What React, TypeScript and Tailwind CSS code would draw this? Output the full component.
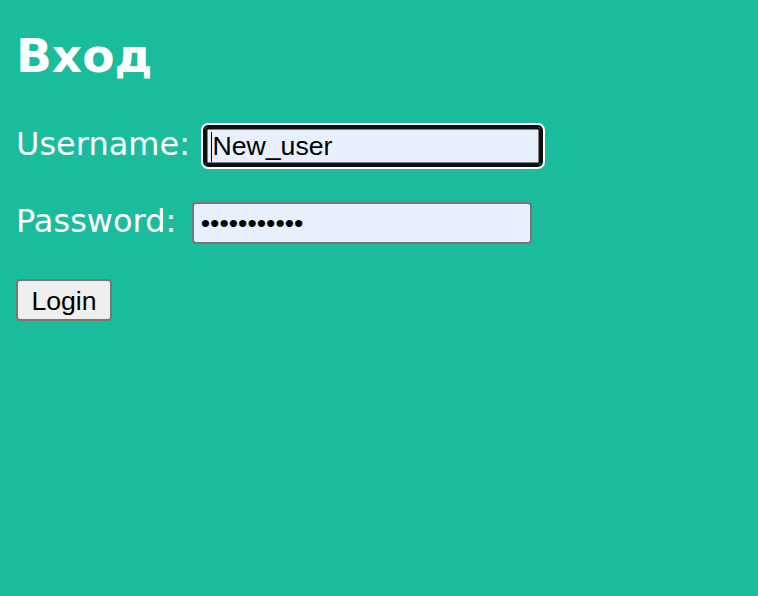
import React from "react";

const App: React.FC = () => {
  return (
    <div
      className="min-h-screen w-full bg-[#1abc9c] px-4 pt-[28px]"
      style={{ fontFamily: '"DejaVu Sans", Verdana, sans-serif' }}
    >
      <h1 className="mb-[42px] text-[47px] leading-[55px] font-bold text-white">Вход</h1>

      <form className="flex flex-col gap-[35px]" onSubmit={(e) => e.preventDefault()}>
        <div className="flex items-baseline gap-[13.5px]">
          <label htmlFor="username" className="text-[32px] leading-none text-white">
            Username:
          </label>
          <div className="relative">
            <input
              id="username"
              name="username"
              type="text"
              defaultValue="New_user"
              className="h-[42px] w-[340px] rounded-[5px] border-2 border-[#101010] bg-[#e8f0fe] px-[7px] text-[26.67px] text-black shadow-[inset_0_0_0_2.5px_#101010] outline-2 outline-white outline-solid"
              style={{ fontFamily: '"Liberation Sans", Arial, sans-serif' }}
            />
            <span className="pointer-events-none absolute top-[7px] left-[8px] h-[30px] w-px bg-black" />
          </div>
        </div>

        <div className="flex items-baseline gap-[15.5px]">
          <label htmlFor="password" className="text-[32px] leading-none text-white">
            Password:
          </label>
          <input
            id="password"
            name="password"
            type="password"
            defaultValue="12345678901"
            className="h-[42px] w-[340px] rounded-[4px] border-2 border-[#767676] bg-[#e8f0fe] px-[7px] text-[26.67px] text-black outline-none"
            style={{ fontFamily: '"Liberation Sans", Arial, sans-serif' }}
          />
        </div>

        <div className="flex">
          <button
            type="submit"
            className="h-[42px] w-[96px] rounded-[4px] border-2 border-[#767676] bg-[#efefef] text-center text-[26.67px] text-black"
            style={{ fontFamily: '"Liberation Sans", Arial, sans-serif' }}
          >
            Login
          </button>
        </div>
      </form>
    </div>
  );
};

export default App;
